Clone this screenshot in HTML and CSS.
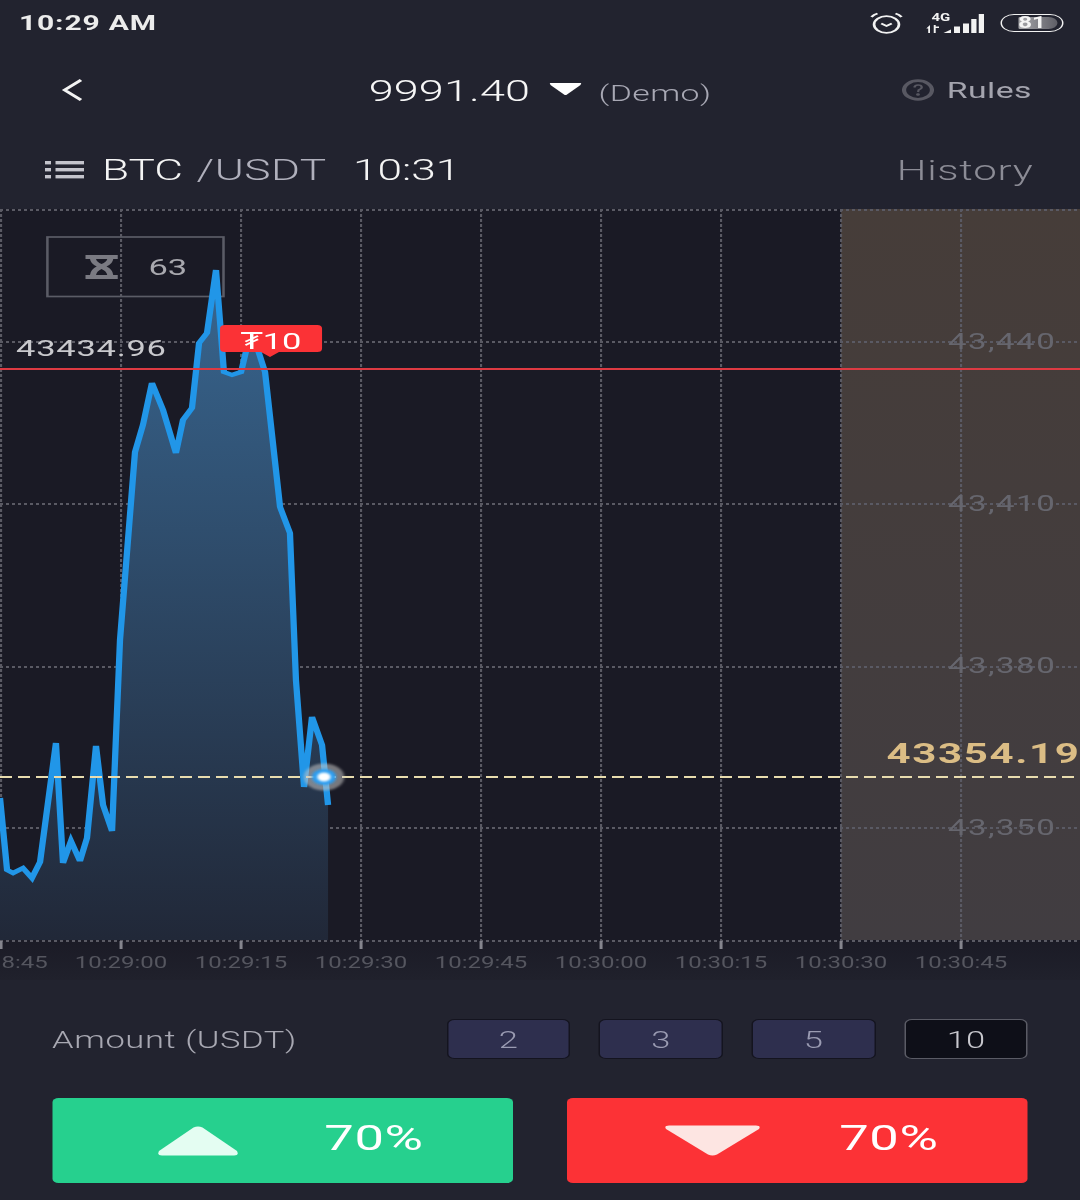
FILE: index.html
```html
<!DOCTYPE html>
<html lang="en">
<head>
    <meta charset="UTF-8">
    <meta name="viewport" content="width=device-width, initial-scale=1.0">
    <title>BTC/USDT Trade</title>
    <link rel="stylesheet" href="styles.css">
</head>
<body>
<div class="app">

    <!-- Status bar -->
    <div class="status-bar">
        <span class="status-time">10:29 AM</span>
        <div class="status-icons">
            <svg class="icon-alarm" viewBox="0 0 22 22" width="22" height="22" fill="none" stroke="#f2f2f2">
                <circle cx="11" cy="12.5" r="8.3" stroke-width="1.8"/>
                <path d="M7.5 11.5 L11 14 L14.5 11.5" stroke-width="1.6"/>
                <path d="M1 5 Q2.5 2.5 5 1.5 M17 1.5 Q19.5 2.5 21 5" stroke-width="1.8"/>
            </svg>
            <svg class="icon-signal" viewBox="0 0 39 22" width="39" height="22">
                <text class="signal-text" x="4" y="9">4G</text>
                <path d="M3 13 L3 21 L1.8 21 L1.8 16.5 L0.5 16.5 Z M5.5 13 L6.8 13 L6.8 14.5 L9 14.5 L9 16 L6.8 16 L6.8 21 L5.5 21 Z" fill="#f2f2f2"/>
                <path d="M12 21 L17 17.5 L17 21 Z" fill="#f2f2f2"/>
                <rect x="19" y="14.5" width="4" height="6.5" fill="#f2f2f2"/>
                <rect x="25" y="11.5" width="4" height="9.5" fill="#f2f2f2"/>
                <rect x="30.5" y="7" width="3.5" height="14" fill="#f2f2f2"/>
                <rect x="35.5" y="2" width="3.5" height="19" fill="#f2f2f2"/>
            </svg>
            <div class="battery">
                <div class="battery-fill"></div>
                <span class="battery-text">81</span>
            </div>
        </div>
    </div>

    <!-- Balance row -->
    <div class="top-row">
        <svg class="icon-back" viewBox="0 0 14 24" width="14" height="24" fill="none" stroke="#f4f4f4" stroke-width="2.4">
            <path d="M13 2 L2 12 L13 22"/>
        </svg>
        <div class="balance">
            <span class="balance-value">9991.40</span>
            <svg class="icon-caret" viewBox="0 0 22 14" width="22" height="14">
                <path d="M0.5 1 L21.5 1 L21 3 L12 12.5 Q11 13.5 10 12.5 L1 3 Z" fill="#ffffff"/>
            </svg>
            <span class="balance-mode">(Demo)</span>
        </div>
        <div class="rules">
            <svg class="icon-help" viewBox="0 0 22 22" width="22" height="22" fill="none" stroke="#585862">
                <circle cx="11" cy="11" r="9.3" stroke-width="2.8"/>
                <path d="M8.5 8.5 Q9 6 11 6 Q13.5 6 13.5 8.2 Q13.5 9.8 11.5 10.8 L11 13" stroke-width="1.5"/>
                <circle cx="11" cy="15.5" r="0.8" fill="#585862"/>
            </svg>
            <span>Rules</span>
        </div>
    </div>

    <!-- Pair row -->
    <div class="pair-row">
        <div class="pair">
            <svg class="icon-list" viewBox="0 0 26 20" width="26" height="20" fill="#c4c4cc">
                <rect x="0" y="1" width="4" height="3.4"/>
                <rect x="0" y="8" width="4" height="3.4"/>
                <rect x="0" y="15" width="4" height="3.4"/>
                <rect x="7" y="1" width="19" height="3.4"/>
                <rect x="7" y="8" width="19" height="3.4"/>
                <rect x="7" y="15" width="19" height="3.4"/>
            </svg>
            <span class="pair-base">BTC</span>
            <span class="pair-quote">/USDT</span>
            <span class="pair-time">10:31</span>
        </div>
        <span class="history">History</span>
    </div>

    <!-- Chart -->
    <svg class="chart" viewBox="0 209 720 771" width="720" height="771">
        <defs>
            <linearGradient id="areaFill" x1="0" y1="270" x2="0" y2="940" gradientUnits="userSpaceOnUse">
                <stop offset="0" stop-color="#386690"/>
                <stop offset="1" stop-color="#212838"/>
            </linearGradient>
            <linearGradient id="zoneFill" x1="0" y1="209" x2="0" y2="940" gradientUnits="userSpaceOnUse">
                <stop offset="0" stop-color="#463d39"/>
                <stop offset="1" stop-color="#413d41"/>
            </linearGradient>
            <linearGradient id="axisFill" x1="0" y1="940" x2="0" y2="980" gradientUnits="userSpaceOnUse">
                <stop offset="0" stop-color="#1b1b26"/>
                <stop offset="1" stop-color="#20212c"/>
            </linearGradient>
            <filter id="soft" x="-50%" y="-50%" width="200%" height="200%">
                <feGaussianBlur stdDeviation="1"/>
            </filter>
        </defs>

        <rect x="0" y="209" width="720" height="731" fill="#1a1a25"/>
        <rect x="0" y="940" width="720" height="40" fill="url(#axisFill)"/>
        <rect x="560.7" y="209" width="159.3" height="731" fill="url(#zoneFill)"/>

        <!-- grid -->
        <g class="grid-h">
            <line x1="0" x2="720" y1="210" y2="210"/>
            <line x1="0" x2="720" y1="342" y2="342"/>
            <line x1="0" x2="720" y1="504" y2="504"/>
            <line x1="0" x2="720" y1="667" y2="667"/>
            <line x1="0" x2="720" y1="828" y2="828"/>
            <line x1="0" x2="720" y1="941" y2="941"/>
        </g>
        <g class="grid-v">
            <line x1="0.7" x2="0.7" y1="209" y2="940"/>
            <line x1="80.7" x2="80.7" y1="209" y2="940"/>
            <line x1="160.7" x2="160.7" y1="209" y2="940"/>
            <line x1="240.7" x2="240.7" y1="209" y2="940"/>
            <line x1="320.7" x2="320.7" y1="209" y2="940"/>
            <line x1="400.7" x2="400.7" y1="209" y2="940"/>
            <line x1="480.7" x2="480.7" y1="209" y2="940"/>
            <line x1="560.7" x2="560.7" y1="209" y2="940"/>
            <line x1="640.7" x2="640.7" y1="209" y2="940"/>
        </g>
        <g class="ticks">
            <line x1="0.7" x2="0.7" y1="941" y2="949"/>
            <line x1="80.7" x2="80.7" y1="941" y2="949"/>
            <line x1="160.7" x2="160.7" y1="941" y2="949"/>
            <line x1="240.7" x2="240.7" y1="941" y2="949"/>
            <line x1="320.7" x2="320.7" y1="941" y2="949"/>
            <line x1="400.7" x2="400.7" y1="941" y2="949"/>
            <line x1="480.7" x2="480.7" y1="941" y2="949"/>
            <line x1="560.7" x2="560.7" y1="941" y2="949"/>
            <line x1="640.7" x2="640.7" y1="941" y2="949"/>
        </g>

        <!-- time labels -->
        <g class="axis-x">
            <text class="axis-first" x="1" y="968">8:45</text>
            <text x="80.7" y="968">10:29:00</text>
            <text x="160.7" y="968">10:29:15</text>
            <text x="240.7" y="968">10:29:30</text>
            <text x="320.7" y="968">10:29:45</text>
            <text x="400.7" y="968">10:30:00</text>
            <text x="480.7" y="968">10:30:15</text>
            <text x="560.7" y="968">10:30:30</text>
            <text x="640.7" y="968">10:30:45</text>
        </g>

        <!-- price labels -->
        <g class="axis-y">
            <text x="632" y="349">43,440</text>
            <text x="632" y="511">43,410</text>
            <text x="632" y="673">43,380</text>
            <text x="632" y="835">43,350</text>
        </g>

        <!-- countdown -->
        <rect class="timer-box" x="31.6" y="237" width="117.4" height="59.5"/>
        <path d="M57 255 H78.5 V259 H75.5 Q75 264 71 266.5 Q75 269 75.5 275 H78.5 V279 H57 V275 H60 Q60.5 269 64.5 266.5 Q60.5 264 60 259 H57 Z M64 259 Q64.5 262 67.7 264 Q71 262 71.5 259 Z M64 275 H71.5 Q71 271 67.7 269 Q64.5 271 64 275 Z" fill="#7a7a82" fill-rule="evenodd"/>
        <text class="timer-text" x="99" y="275">63</text>

        <!-- price line -->
        <polygon fill="url(#areaFill)" points="0,798 4.7,870 8.7,873 15.3,868 21.3,878 26.7,862 37.3,743 42,863 47.3,841 53.3,861 58,838 64,746 68.7,805 74.7,831 80,640 90,452 95.3,425 101.3,383 108.7,410 117.3,453 122,420 128,408 132.7,343 138,333 144,270 149.3,372 154.7,375 160.7,372 164.7,347 172,350 176.7,372 186.7,507 193.3,533 197.3,680 202.7,787 208,717 214.7,745 218.7,805 218.7,940 0,940"/>
        <polyline class="price-line" points="0,798 4.7,870 8.7,873 15.3,868 21.3,878 26.7,862 37.3,743 42,863 47.3,841 53.3,861 58,838 64,746 68.7,805 74.7,831 80,640 90,452 95.3,425 101.3,383 108.7,410 117.3,453 122,420 128,408 132.7,343 138,333 144,270 149.3,372 154.7,375 160.7,372 164.7,347 172,350 176.7,372 186.7,507 193.3,533 197.3,680 202.7,787 208,717 214.7,745 218.7,805"/>

        <line class="open-line" x1="0" x2="720" y1="369" y2="369"/>
        <text class="open-price" x="10.7" y="356">43434.96</text>

        <!-- order badge -->
        <path d="M150 325 H211.5 Q214.7 325 214.7 328.5 V348.5 Q214.7 352 211.5 352 H186 L180 357 L174 352 H150 Q146.7 352 146.7 348.5 V328.5 Q146.7 325 150 325 Z" fill="#fb3236"/>
        <text class="badge-text" x="160.5" y="349">₮10</text>

        <!-- current price -->
        <line class="now-line" x1="0" x2="718" y1="777" y2="777"/>
        <circle cx="216" cy="777" r="13.5" fill="#c4c4c4" fill-opacity="0.55" filter="url(#soft)"/>
        <circle cx="216" cy="777" r="8" fill="#2a9cf0" filter="url(#soft)"/>
        <circle cx="216" cy="777" r="4.5" fill="#ffffff" filter="url(#soft)"/>
        <text class="now-price" x="591" y="763">43354.19</text>
    </svg>

    <!-- Order panel -->
    <div class="panel">
        <div class="amount-row">
            <span class="amount-label">Amount (USDT)</span>
            <div class="amount-chips">
                <div class="chip">2</div>
                <div class="chip">3</div>
                <div class="chip">5</div>
                <div class="chip active">10</div>
            </div>
        </div>
        <div class="trade-row">
            <div class="trade trade-up">
                <svg viewBox="0 0 54 30" width="54" height="30">
                    <path d="M24 1.5 Q27 -0.5 30 1.5 L53 25 Q54.5 29.5 51 29.5 H3 Q-0.5 29.5 1 25 Z" fill="#e4fdf2"/>
                </svg>
                <span>70%</span>
            </div>
            <div class="trade trade-down">
                <svg viewBox="0 0 64 31" width="64" height="31">
                    <path d="M3 0.5 H61 Q64.5 0.5 63 4 L35 29.5 Q32 31.5 29 29.5 L1 4 Q-0.5 0.5 3 0.5 Z" fill="#fde5e2"/>
                </svg>
                <span>70%</span>
            </div>
        </div>
    </div>

</div>
</body>
</html>
```

FILE: styles.css
```css
/* Reset default styles */
* {
    box-sizing: border-box;
    margin: 0;
    padding: 0;
}

html, body {
    width: 1080px;
    height: 1200px;
    overflow: hidden;
    background-color: #22232f;
}

/* The capture is a 720px wide phone screen stretched to 1080px */
.app {
    width: 720px;
    height: 1200px;
    transform: scaleX(1.5);
    transform-origin: 0 0;
    background-color: #22232f;
    font-family: 'Roboto', 'DejaVu Sans', sans-serif;
    color: #fff;
}

/* Status bar */
.status-bar {
    height: 45px;
    display: flex;
    justify-content: space-between;
    align-items: center;
    padding: 0 11px 0 12.7px;
}

.status-time {
    font-size: 20px;
    font-weight: bold;
    letter-spacing: 0.55px;
    color: #ececec;
}

.status-icons {
    display: flex;
    align-items: center;
}

.icon-alarm {
    margin-right: 1px;
}

.icon-signal {
    margin-left: 14px;
}

.signal-text {
    font-size: 10px;
    font-weight: bold;
    fill: #f2f2f2;
}

.battery {
    position: relative;
    width: 42px;
    height: 18px;
    margin-left: 11px;
    border: 1.5px solid #f2f2f2;
    border-radius: 9px;
    display: flex;
    justify-content: center;
    align-items: center;
}

.battery-fill {
    position: absolute;
    left: 11px;
    top: 2px;
    bottom: 2px;
    width: 26px;
    border-radius: 1px 6px 6px 1px;
    background: linear-gradient(to right, #a8a8ac, #5e5e66);
}

.battery-text {
    position: relative;
    font-size: 16px;
    font-weight: bold;
    color: #f4f4f4;
}

/* Balance row */
.top-row {
    height: 90px;
    display: grid;
    grid-template-columns: 1fr auto 1fr;
    align-items: center;
    padding: 0 32px;
}

.icon-back {
    margin-left: 8.5px;
}

.balance {
    display: flex;
    align-items: center;
}

.balance-value {
    font-size: 30px;
    font-weight: 300;
    letter-spacing: 0.1px;
    color: #f6f6f6;
}

.icon-caret {
    margin-left: 13px;
    margin-bottom: 3px;
}

.balance-mode {
    margin-left: 10.5px;
    margin-top: 6px;
    font-size: 22.5px;
    font-weight: 300;
    letter-spacing: 0.3px;
    color: #a8a8b4;
}

.rules {
    justify-self: end;
    display: flex;
    align-items: center;
    gap: 8px;
    margin-top: -1px;
    font-size: 22.5px;
    letter-spacing: 0.3px;
    color: #a4a4ae;
}

/* Pair row */
.pair-row {
    height: 74px;
    display: flex;
    justify-content: space-between;
    align-items: center;
    padding: 0 31px 4px 30px;
}

.pair {
    display: flex;
    align-items: center;
}

.icon-list {
    margin-right: 12px;
}

.pair-base {
    font-size: 29.5px;
    font-weight: 300;
    color: #f4f4f4;
}

.pair-quote {
    margin-left: 9px;
    font-size: 29.5px;
    font-weight: 300;
    letter-spacing: 0.3px;
    color: #b0b0bc;
}

.pair-time {
    margin-left: 17.5px;
    font-size: 29.5px;
    font-weight: 300;
    color: #f4f4f4;
}

.history {
    font-size: 28px;
    font-weight: 300;
    letter-spacing: 0.5px;
    color: #8c8c96;
}

/* Chart */
.chart {
    display: block;
}

.grid-h line {
    stroke: #5a5a64;
    stroke-width: 2;
    stroke-dasharray: 2 2;
}

.grid-v line {
    stroke: #5a5a64;
    stroke-width: 1.4;
    stroke-dasharray: 3 2;
}

.ticks line {
    stroke: #85858e;
    stroke-width: 2;
}

.axis-x text {
    font-size: 16px;
    text-anchor: middle;
    fill: #55565f;
}

.axis-x .axis-first {
    text-anchor: start;
}

.axis-y text {
    font-size: 22px;
    letter-spacing: 1px;
    fill: #66666e;
}

.timer-box {
    fill: none;
    stroke: #5b5c66;
    stroke-width: 1.7;
}

.timer-text {
    font-size: 23px;
    fill: #a8a8ae;
}

.price-line {
    fill: none;
    stroke: #2196e8;
    stroke-width: 4.2;
}

.open-line {
    stroke: #dd3a42;
    stroke-width: 2;
}

.open-price {
    font-size: 23px;
    letter-spacing: 0.5px;
    fill: #c9c9cd;
}

.badge-text {
    font-size: 23px;
    fill: #fff;
}

.now-line {
    stroke: #e8dcae;
    stroke-width: 2;
    stroke-dasharray: 8 4;
}

.now-price {
    font-size: 28px;
    font-weight: bold;
    letter-spacing: 1.1px;
    fill: #dbbd85;
}

/* Order panel */
.panel {
    padding: 39px 34.7px 0;
}

.amount-row {
    display: flex;
    justify-content: space-between;
    align-items: center;
    height: 40px;
}

.amount-label {
    font-size: 23px;
    font-weight: 300;
    letter-spacing: 0.4px;
    padding-top: 2px;
    color: #a8a8b2;
}

.amount-chips {
    display: flex;
    gap: 19px;
}

.chip {
    width: 82.7px;
    height: 40px;
    display: flex;
    justify-content: center;
    align-items: center;
    padding-top: 3px;
    background-color: #2e2f4e;
    border: 1.5px solid #14141f;
    border-radius: 5px;
    font-size: 23px;
    font-weight: 300;
    color: #9a9bb2;
}

.chip.active {
    background-color: #0e0f18;
    border-color: #5a5b65;
    color: #c8c8ce;
}

.trade-row {
    display: flex;
    justify-content: space-between;
    margin-top: 39px;
}

.trade {
    width: 307.3px;
    height: 85px;
    display: flex;
    align-items: center;
    border-radius: 4px;
    font-size: 35px;
    letter-spacing: 0.4px;
}

.trade span {
    margin-top: -4px;
}

.trade-up {
    background-color: #26d08e;
}

.trade-up svg {
    margin: 0 57.5px 0 70px;
}

.trade-down {
    background-color: #fc3236;
}

.trade-down svg {
    margin: 0 52.8px 0 64.7px;
}
```
